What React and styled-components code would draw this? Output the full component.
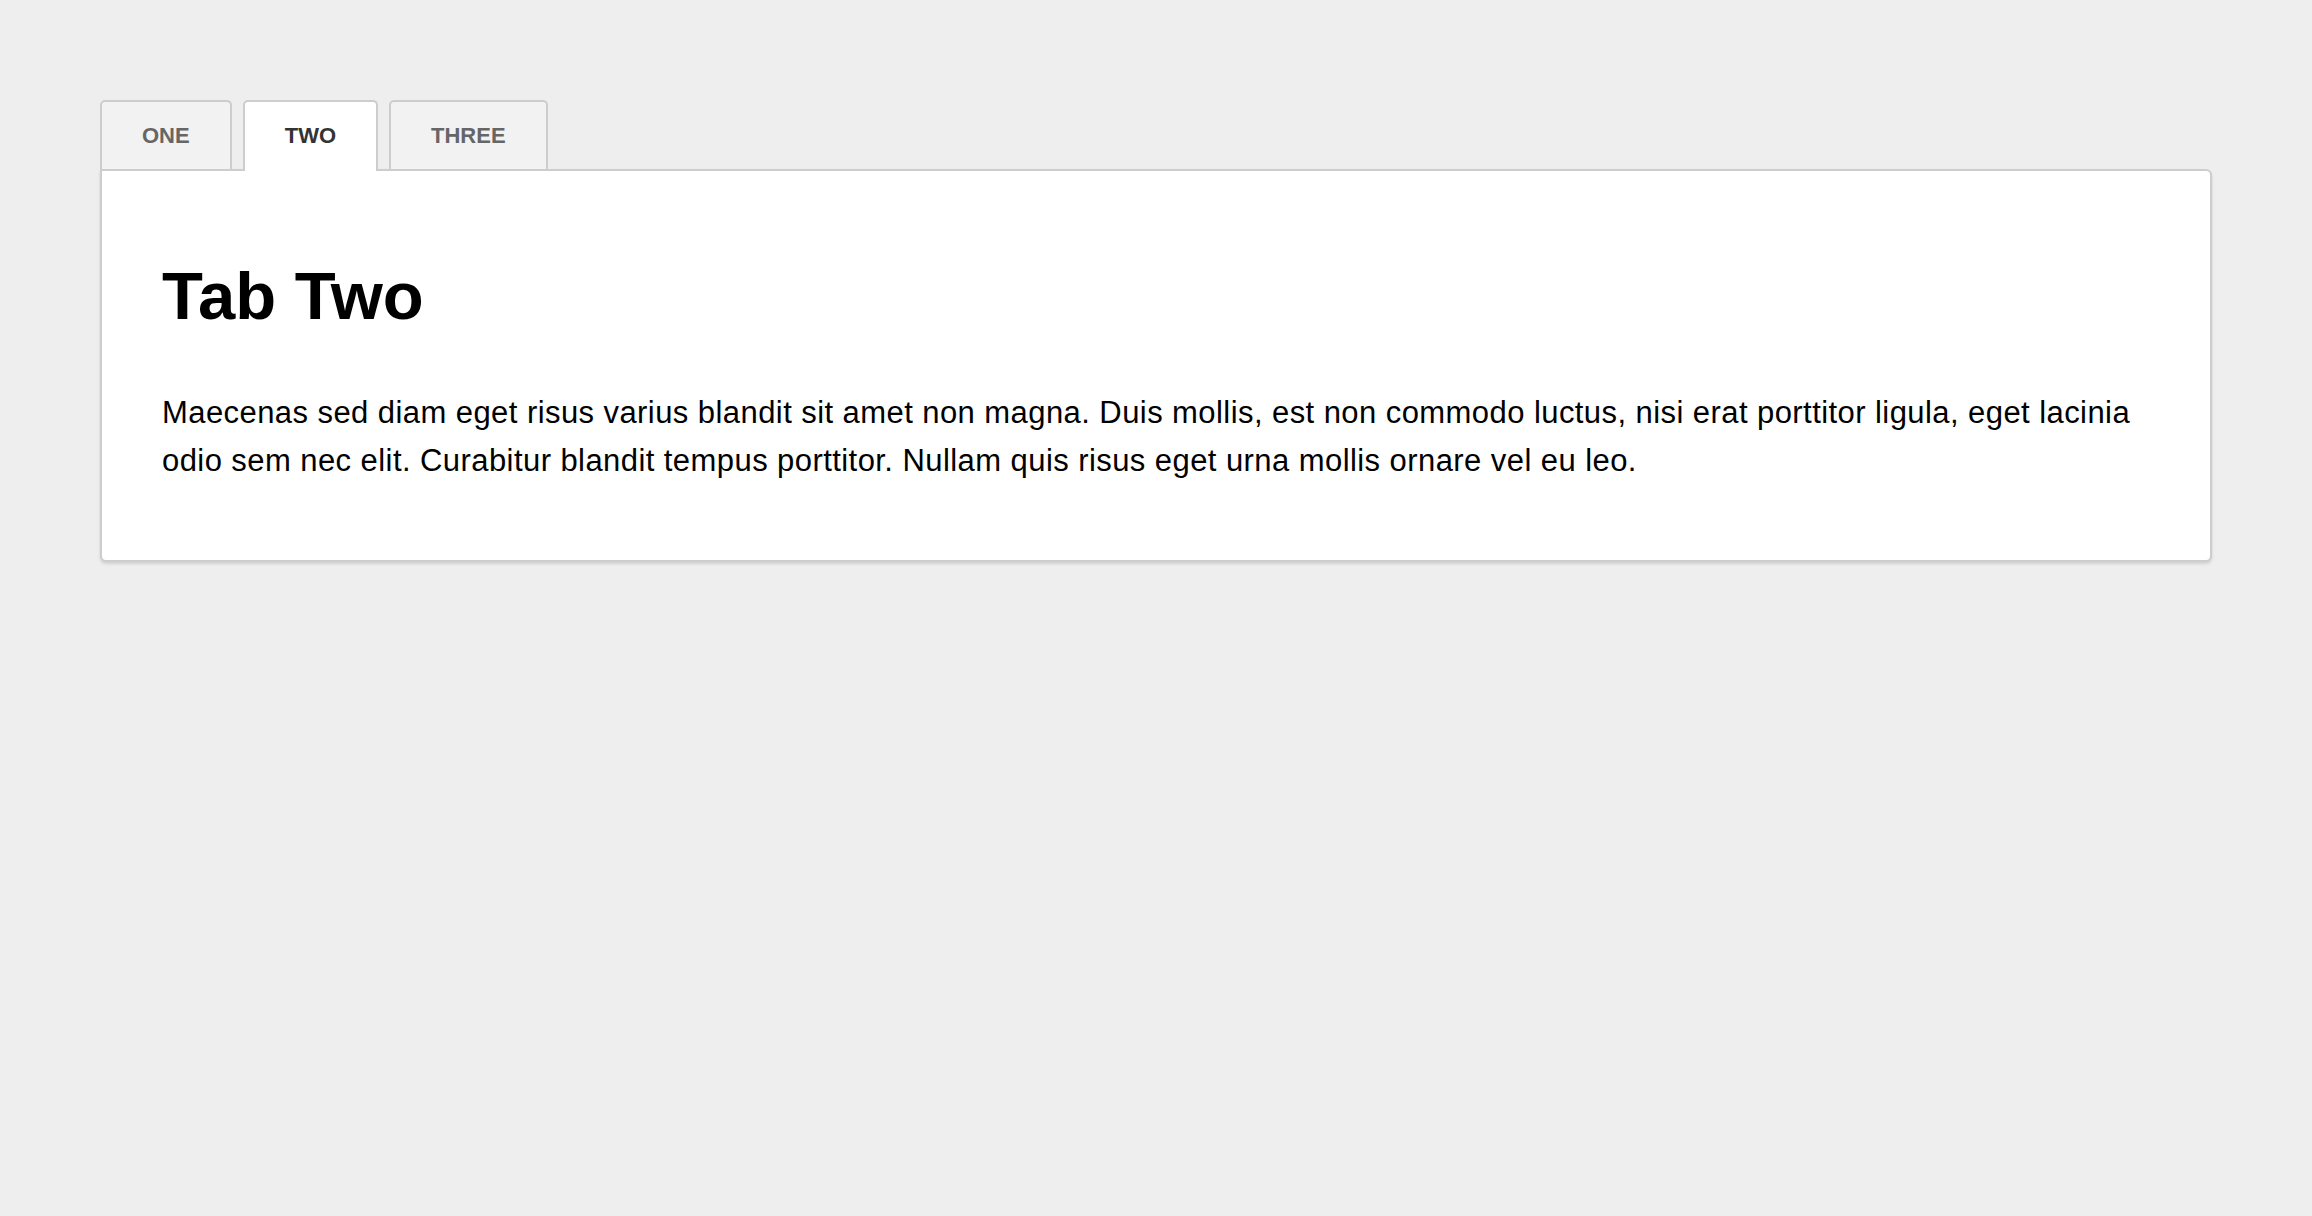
import React, { useState } from "react";
import styled, { createGlobalStyle } from "styled-components";

const GlobalStyle = createGlobalStyle`
    html, body {
        margin: 0;
        padding: 0;
        background: #eeeeee;
    }
    body {
        font-family: "Liberation Sans", Helvetica, Arial, sans-serif;
        color: #000;
    }
`;

const tabs = [
    {
        id: 1,
        label: "ONE",
        title: "Tab One",
        text: "Lorem ipsum dolor sit amet, consectetur adipiscing elit. Integer posuere erat a ante venenatis dapibus posuere velit aliquet.",
    },
    {
        id: 2,
        label: "TWO",
        title: "Tab Two",
        text: "Maecenas sed diam eget risus varius blandit sit amet non magna. Duis mollis, est non commodo luctus, nisi erat porttitor ligula, eget lacinia odio sem nec elit. Curabitur blandit tempus porttitor. Nullam quis risus eget urna mollis ornare vel eu leo.",
    },
    {
        id: 3,
        label: "THREE",
        title: "Tab Three",
        text: "Donec ullamcorper nulla non metus auctor fringilla. Vestibulum id ligula porta felis euismod semper.",
    },
];

function App() {
    const [active, setActive] = useState(2);
    const current = tabs.find((tab) => tab.id === active);

    return (
        <Page>
            <GlobalStyle />
            <TabBar>
                {tabs.map((tab) => (
                    <Tab
                        key={tab.id}
                        $active={tab.id === active}
                        onClick={() => setActive(tab.id)}
                    >
                        {tab.label}
                    </Tab>
                ))}
            </TabBar>
            <Panel>
                <Heading>{current.title}</Heading>
                <Text>{current.text}</Text>
            </Panel>
        </Page>
    );
}
export default App;

const Page = styled.div`
    padding: 100px 100px;
`;
const TabBar = styled.div`
    display: flex;
    align-items: flex-start;
    gap: 11px;
    margin-bottom: -2px;
    position: relative;
    z-index: 1;
`;
const Tab = styled.button`
    box-sizing: border-box;
    height: ${(p) => (p.$active ? "71px" : "69px")};
    padding: 0 40px ${(p) => (p.$active ? "2px" : "0")};
    border: 2px solid #cdcdcd;
    border-bottom: none;
    border-radius: 5px 5px 0 0;
    background: ${(p) => (p.$active ? "#fff" : "#f2f2f2")};
    color: ${(p) => (p.$active ? "#333" : "#666")};
    font-family: "Liberation Sans", Helvetica, Arial, sans-serif;
    font-size: 22px;
    font-weight: bold;
    cursor: pointer;
    outline: none;
`;
const Panel = styled.div`
    position: relative;
    z-index: 0;
    background: #fff;
    border: 2px solid #cdcdcd;
    border-radius: 0 6px 6px 6px;
    box-shadow: 0 2px 3px rgba(0, 0, 0, 0.12);
    padding: 86px 60px 75px;
`;
const Heading = styled.h1`
    margin: 0 0 54px;
    font-size: 67px;
    line-height: 78px;
    font-weight: bold;
    color: #000;
`;
const Text = styled.p`
    margin: 0;
    font-size: 31px;
    line-height: 48px;
    letter-spacing: 0.43px;
    color: #000;
`;
